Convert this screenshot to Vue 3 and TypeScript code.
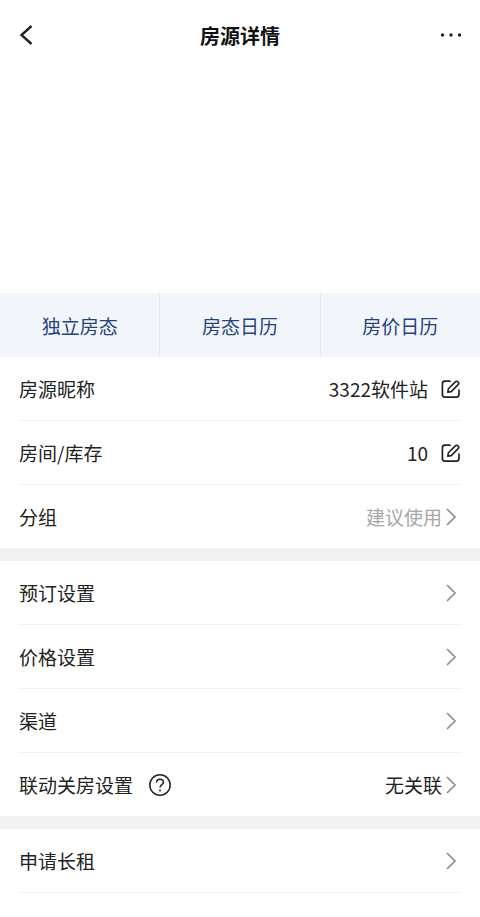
<script setup lang="ts">
interface Row {
  label: string
  value?: string
  muted?: boolean
  icon: 'edit' | 'arrow'
  help?: boolean
}
const tabs: string[] = ['独立房态', '房态日历', '房价日历']
const groups: Row[][] = [
  [
    { label: '房源昵称', value: '3322软件站', icon: 'edit' },
    { label: '房间/库存', value: '10', icon: 'edit' },
    { label: '分组', value: '建议使用', muted: true, icon: 'arrow' },
  ],
  [
    { label: '预订设置', icon: 'arrow' },
    { label: '价格设置', icon: 'arrow' },
    { label: '渠道', icon: 'arrow' },
    { label: '联动关房设置', value: '无关联', icon: 'arrow', help: true },
  ],
  [{ label: '申请长租', icon: 'arrow' }],
]
</script>

<template>
  <div class="page">
    <header class="nav">
      <svg class="back" width="16" height="24" viewBox="0 0 16 24" fill="none">
        <path d="M13.5 3 L3.5 12 L13.5 21" stroke="#222" stroke-width="2.4" />
      </svg>
      <h1 class="title">房源详情</h1>
      <svg class="more" width="22" height="6" viewBox="0 0 22 6">
        <circle cx="2.5" cy="3" r="1.7" fill="#222" />
        <circle cx="11" cy="3" r="1.7" fill="#222" />
        <circle cx="19.5" cy="3" r="1.7" fill="#222" />
      </svg>
    </header>
    <div class="blank"></div>
    <nav class="tabs">
      <div v-for="tab in tabs" :key="tab" class="tab">{{ tab }}</div>
    </nav>
    <section v-for="(group, g) in groups" :key="g" class="group">
      <div v-for="row in group" :key="row.label" class="row">
        <span class="label">{{ row.label }}</span>
        <svg v-if="row.help" class="help" width="24" height="24" viewBox="0 0 24 24" fill="none">
          <circle cx="12" cy="12" r="10.2" stroke="#222" stroke-width="1.5" />
          <path d="M8.6 9.6 C8.6 7.5 10.1 6.3 12 6.3 C13.9 6.3 15.4 7.5 15.4 9.3 C15.4 11.6 12 11.8 12 14.6" stroke="#222" stroke-width="1.5" />
          <circle cx="12" cy="17.4" r="1" fill="#222" />
        </svg>
        <span class="spacer"></span>
        <span v-if="row.value" class="value" :class="{ muted: row.muted }">{{ row.value }}</span>
        <svg v-if="row.icon === 'edit'" class="edit" width="20" height="20" viewBox="0 0 20 20" fill="none">
          <path d="M9 2.2 H4 A2.6 2.6 0 0 0 1.4 4.8 V15.6 A2.6 2.6 0 0 0 4 18.2 H15.4 A2.6 2.6 0 0 0 18 15.6 V11" stroke="#222" stroke-width="1.7" stroke-linecap="round" />
          <path d="M6.8 13.2 L7.4 9.8 L14.6 2.6 A1.4 1.4 0 0 1 16.6 2.6 L17.4 3.4 A1.4 1.4 0 0 1 17.4 5.4 L10.2 12.6 Z" stroke="#222" stroke-width="1.6" stroke-linejoin="round" />
        </svg>
        <svg v-else class="arrow" width="12" height="20" viewBox="0 0 12 20" fill="none">
          <path d="M2 2 L10 10 L2 18" stroke="#8c8c8c" stroke-width="1.7" />
        </svg>
      </div>
    </section>
  </div>
</template>

<style scoped>
.page {
  width: 480px;
  height: 917px;
  overflow: hidden;
  background: #fff;
  font-family: "Noto Sans CJK SC", "Liberation Sans", sans-serif;
  color: #222;
}
.nav {
  height: 70px;
  display: flex;
  align-items: center;
  justify-content: space-between;
  padding: 0 18px;
  position: relative;
}
.title {
  margin: 0;
  font-size: 20px;
  font-weight: 700;
  color: #111;
  position: absolute;
  left: 0;
  right: 0;
  text-align: center;
}
.back {
  margin-left: 0;
}
.blank {
  height: 223px;
}
.tabs {
  height: 64px;
  display: flex;
  background: #f2f5fa;
}
.tab {
  flex: 1;
  display: flex;
  align-items: center;
  justify-content: center;
  font-size: 19px;
  color: #27437f;
  border-left: 1px solid #e6e9ef;
}
.tab:first-child {
  border-left: 0;
}
.group {
  padding: 0 19px 0 19px;
  border-bottom: 13px solid #f1f1f1;
}
.group:last-child {
  border-bottom: 0;
}
.row {
  height: 64px;
  box-sizing: border-box;
  display: flex;
  align-items: center;
  border-bottom: 1px solid #f1f1f1;
  font-size: 19px;
}
.group:nth-of-type(1) .row:last-child,
.group:nth-of-type(2) .row:last-child {
  height: 63px;
  border-bottom: 0;
}
.label {
  color: #222;
}
.help {
  margin-left: 15px;
}
.spacer {
  flex: 1;
}
.value {
  color: #222;
}
.value.muted {
  color: #a6a6a6;
}
.edit {
  margin-left: 13px;
  margin-right: 0;
}
.arrow {
  margin-left: 3px;
  margin-right: 4px;
}
</style>
